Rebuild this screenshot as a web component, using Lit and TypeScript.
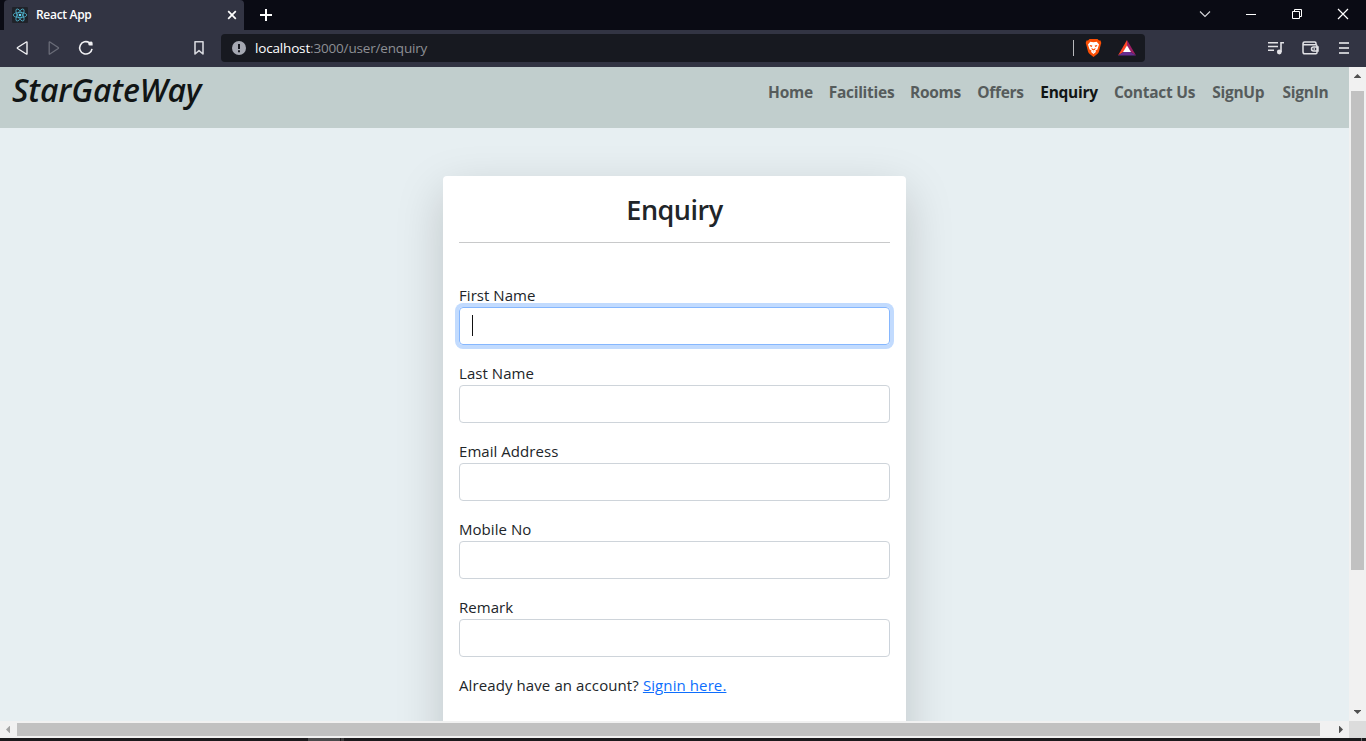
import { LitElement, html, svg, css } from "lit";
import { customElement } from "lit/decorators.js";
import { styleMap } from "lit/directives/style-map.js";

@customElement("browser-chrome")
class BrowserChrome extends LitElement {
  static styles = css`
    :host { display: block; height: 67px; color: #fff; font-family: "Open Sans", "Noto Sans", sans-serif; }
    * { box-sizing: border-box; }
    svg { display: block; flex: none; }
    .tabs { height: 30px; background: #0a0b14; display: flex; align-items: stretch; padding-left: 4px; }
    .tab { width: 240px; background: #323443; border-radius: 4px 4px 0 0; display: flex; align-items: center; padding: 0 7px 0 8px; }
    .title { flex: 1; margin-left: 8px; font-size: 12px; font-weight: 600; letter-spacing: -0.3px; line-height: 30px; }
    .plus { margin: 9px 0 0 16px; }
    .grow { flex: 1; }
    .bar { height: 37px; background: #323443; display: flex; align-items: center; padding: 0 0 1px 15px; }
    .reload { margin-left: 17px; }
    .fwd { margin-left: 18px; }
    .mark { margin-left: 99px; }
    .url { margin-left: 16px; width: 924px; height: 28px; background: #171920; border-radius: 4px; display: flex; align-items: center; padding-left: 11px; }
    .address { margin-left: 9px; flex: 1; font-size: 13.5px; letter-spacing: -0.17px; color: #8d8f94; line-height: 28px; white-space: pre; }
    .host { color: #fff; }
    .divider { width: 1px; height: 16px; background: #b8b9bc; }
    .brave { margin-left: 11px; }
    .bat { margin: 0 9px 0 16px; }
    .tools { display: flex; align-items: center; margin-left: 123px; }
    .wallet { margin-left: 17px; }
    .menu { margin-left: 20px; }
  `;
  render() {
    return html`
      <div class="tabs">
        <div class="tab">
          <svg width="16" height="16" viewBox="0 0 16 16">
            <rect width="16" height="16" rx="1" fill="#20232a" />
            <g fill="none" stroke="#4fb3cc" stroke-width=".8">
              ${[0, 60, 120].map((a) => svg`<ellipse cx="8" cy="8" rx="6.8" ry="2.6" transform=${`rotate(${a} 8 8)`} />`)}
            </g>
            <circle cx="8" cy="8" r="1.3" fill="#61dafb" />
          </svg>
          <span class="title">React App</span>
          <svg width="10" height="10" viewBox="0 0 10 10"><path d="M1.2 1.2 8.8 8.8M8.8 1.2 1.2 8.8" stroke="#fff" stroke-width="1.7" /></svg>
        </div>
        <svg class="plus" width="12" height="12" viewBox="0 0 12 12"><path d="M6 0V12M0 6H12" stroke="#fff" stroke-width="2" /></svg>
        <div class="grow"></div>
        <svg width="168" height="30" viewBox="1198 0 168 30" fill="none" stroke="#fff">
          <path d="M1200 11.5 1205 16.5 1210 11.5" stroke="#d8d8dc" stroke-width="1.1" />
          <path d="M1246 14.5H1256" />
          <path d="M1292.500 11.500H1299.500V18.500H1292.500ZM1294.500 11.500V9.500H1301.500V16.500H1299.500" />
          <path d="M1338 9 1348 19M1348 9 1338 19" stroke-width="1.2" />
        </svg>
      </div>
      <div class="bar">
        <svg width="14" height="16" viewBox="0 0 14 16"><path d="M12 2.300V13.700Q12 14.400 11.300 14L2.600 8.500Q2 8 2.600 7.500L11.300 2Q12 1.600 12 2.300Z" fill="none" stroke="#f0f0f3" stroke-width="1.4" /></svg>
        <svg class="fwd" width="14" height="16" viewBox="0 0 14 16"><path d="M2.200 2.300V13.700Q2.200 14.400 2.900 14L11.200 8.500Q11.800 8 11.200 7.500L2.900 2Q2.200 1.600 2.200 2.300Z" fill="none" stroke="#6a6c78" stroke-width="1.300" /></svg>
        <svg class="reload" width="16" height="16" viewBox="0 0 16 16"><path d="M11.500 2.800A6.200 6.200 0 1 0 14 8.800" fill="none" stroke="#f0f0f3" stroke-width="1.600" /><path d="M10.300 1.900 13.300 1.400Q14.600 1.500 14.600 3V5.600H11.800Q10.300 5.500 10.300 4Z" fill="#f0f0f3" /></svg>
        <svg class="mark" width="12" height="16" viewBox="0 0 12 16"><path d="M2 1.700H10V14L6 10.700 2 14Z" fill="none" stroke="#d5d6dc" stroke-width="1.600" stroke-linejoin="round" /></svg>
        <div class="url">
          <svg width="14" height="14" viewBox="0 0 14 14"><circle cx="7" cy="7" r="7" fill="#a5a8b2" /><path d="M6 3H8V8H6ZM6 9.300H8V11.200H6Z" fill="#171920" /></svg>
          <span class="address"><span class="host">localhost</span>:3000/user/enquiry</span>
          <span class="divider"></span>
          <svg class="brave" width="17" height="18" viewBox="0 0 17 18">
            <path d="M4.500 0H12.500L14 1.500 15.500 1.600 16.300 4 15.800 5.500 14 12.500Q13.600 14 12 15.200L8.500 18 5 15.200Q3.400 14 3 12.500L1.200 5.500.7 4 1.500 1.600 3 1.500Z" fill="#fb4f05" />
            <path d="M5.300 2.700 8.500 3.300 11.700 2.700 14 5.500 13.300 7.700 12.400 10.500 10.500 11.600 10.900 13 8.500 15 6.100 13 6.500 11.600 4.600 10.500 3.700 7.700 3 5.500Z" fill="#fff" />
            <path d="M4.700 5.900 7.300 6.500 6.900 7.900 5 7.200ZM12.300 5.900 9.700 6.500 10.100 7.900 12 7.200ZM6.300 8.700 8.500 10.300 10.700 8.700 10 10.700 8.500 11.600 7 10.700ZM7.400 12.700H9.600L8.500 13.300Z" fill="#fb4f05" />
          </svg>
          <svg class="bat" width="18" height="16" viewBox="0 0 18 16">
            <path d="M9 0 0 15.500 5.500 12 9 6Z" fill="#ff4724" /><path d="M9 0 18 15.500 12.500 12 9 6Z" fill="#9e1f63" /><path d="M0 15.500H18L12.500 12H5.500Z" fill="#662d91" /><path d="M9 5.500 5 12H13Z" fill="#fff" />
          </svg>
        </div>
        <div class="tools">
          <svg width="17" height="14" viewBox="0 0 17 14"><path d="M0 1.800H10M0 5.500H10M0 9.200H6M13 11V1.800H16" fill="none" stroke="#e2e2e6" stroke-width="1.600" /><circle cx="11.300" cy="11" r="2.400" fill="#e2e2e6" /></svg>
          <svg class="wallet" width="17" height="14" viewBox="0 0 17 14" fill="none" stroke="#e2e2e6" stroke-width="1.500"><path d="M14 3.500V2.200Q14 1 12.800 1H2.600Q1 1 1 2.600V11Q1 12.800 2.800 12.800H13.800Q15 12.800 15 11.500V5Q15 3.700 13.800 3.700H2.500Q1 3.700 1 2.500M16 5.900H11.500Q9.500 5.900 9.500 8 9.500 9.900 11.500 9.900H16Z" /><path d="M11.500 8H13" /></svg>
          <svg class="menu" width="10" height="12" viewBox="0 0 10 12"><path d="M0 1H10M0 6H10M0 11H10" stroke="#c4c5ca" stroke-width="2" /></svg>
        </div>
      </div>`;
  }
}

const links = [
  { text: "Home", width: 45 }, { text: "Facilities", width: 65 }, { text: "Rooms", width: 51 },
  { text: "Offers", width: 47 }, { text: "Enquiry", width: 58 }, { text: "Contact Us", width: 81 },
  { text: "SignUp", width: 54.5 }, { text: "SignIn", width: 48 },
];

@customElement("site-nav")
class SiteNav extends LitElement {
  static styles = css`
    :host { display: flex; justify-content: space-between; height: 61px; flex: none; background: #c1cecd; padding: 0 19.5px 0 12px; font-family: "Open Sans", "Noto Sans", sans-serif; white-space: nowrap; }
    .brand { font-size: 32px; font-style: italic; font-weight: 600; line-height: 46px; letter-spacing: -0.2px; color: #111515; }
    .links { display: flex; gap: 16px; height: 51px; align-items: center; }
    .link { display: flex; justify-content: center; font-size: 15.500px; font-weight: 700; line-height: 23px; letter-spacing: -0.27px; color: #565c5c; }
    .active { color: #111515; }
  `;
  render() {
    return html`<span class="brand">StarGateWay</span>
      <nav class="links">
        ${links.map((l) => html`<span class="link ${l.text === "Enquiry" ? "active" : ""}" style=${styleMap({ width: `${l.width}px` })}>${l.text}</span>`)}
      </nav>`;
  }
}

@customElement("enquiry-form")
class EnquiryForm extends LitElement {
  static styles = css`
    :host { display: block; box-sizing: border-box; width: 463px; height: 640px; flex: none; margin: 48px auto 0; padding: 16px; background: #fff; border-radius: 4px; box-shadow: 0 16px 48px rgba(0, 0, 0, 0.175); font-family: "Open Sans", "Noto Sans", sans-serif; color: #212529; }
    .heading { margin: 0; text-align: center; font-size: 27px; font-weight: 600; line-height: 36px; height: 50px; letter-spacing: -0.5px; }
    .rule { height: 1px; background: #c8c9ca; margin-bottom: 40px; }
    .group { margin-bottom: 16px; }
    .label { display: block; height: 24px; line-height: 24px; font-size: 15px; letter-spacing: 0.05px; }
    .field { box-sizing: border-box; height: 38px; border: 1px solid #ced4da; border-radius: 4px; padding: 7px 12px; }
    .focused { border-color: #86b7fe; box-shadow: 0 0 0 4px #c2dbfe; }
    .caret { display: block; width: 1px; height: 21px; background: #111; }
    .note { font-size: 15px; line-height: 24px; letter-spacing: 0.1px; white-space: nowrap; }
    .signin { color: #0d6efd; text-decoration: underline; }
  `;
  render() {
    return html`<h3 class="heading">Enquiry</h3>
      <div class="rule"></div>
      ${["First Name", "Last Name", "Email Address", "Mobile No", "Remark"].map((name, i) => html`
        <div class="group">
          <span class="label">${name}</span>
          <div class="field ${i === 0 ? "focused" : ""}">${i === 0 ? html`<span class="caret"></span>` : ""}</div>
        </div>`)}
      <div class="note">Already have an account? <span class="signin">Signin here.</span></div>`;
  }
}

@customElement("app-root")
class AppRoot extends LitElement {
  static styles = css`
    :host { display: block; width: 1366px; height: 741px; overflow: hidden; }
    svg { display: block; flex: none; }
    .view { display: grid; grid-template-columns: 1349px 17px; grid-template-rows: 654px 17px; height: 671px; }
    .page { display: flex; flex-direction: column; overflow: hidden; background: #e7eff2; }
    .vertical { background: #f1f1f1; display: flex; flex-direction: column; align-items: center; }
    .vthumb { width: 13px; height: 479px; background: #c1c1c1; margin-top: 7px; }
    .horizontal { background: #f1f1f1; display: flex; align-items: center; }
    .hthumb { width: 1303px; height: 13px; background: #c1c1c1; }
    .corner { background: #dcdcdc; }
    .space { flex: 1; }
    .strip { height: 3px; background: #1b1a1c; display: flex; padding-left: 308px; gap: 1px; }
    .task { width: 32px; background: #4a4a4b; }
    .task-end { width: 3px; background: #3c3c3d; }
    .edge { margin-left: auto; margin-right: 4px; width: 1px; background: #68686a; }
  `;
  render() {
    return html`<browser-chrome></browser-chrome>
      <div class="view">
        <div class="page"><site-nav></site-nav><enquiry-form></enquiry-form></div>
        <div class="vertical">
          <svg width="17" height="17"><path d="M8.500 7 12 10.500V11H5V10.500Z" fill="#505050" /></svg>
          <div class="vthumb"></div>
          <div class="space"></div>
          <svg width="17" height="17"><path d="M5 6H12V6.500L8.500 10 5 6.500Z" fill="#505050" /></svg>
        </div>
        <div class="horizontal">
          <svg width="17" height="17"><path d="M6 8.500 9.500 5H10V12H9.500Z" fill="#a3a3a3" /></svg>
          <div class="hthumb"></div>
          <div class="space"></div>
          <svg width="17" height="17"><path d="M11 8.500 7.500 5H7V12H7.500Z" fill="#505050" /></svg>
        </div>
        <div class="corner"></div>
      </div>
      <div class="strip"><div class="task"></div><div class="task-end"></div><div class="edge"></div></div>`;
  }
}
